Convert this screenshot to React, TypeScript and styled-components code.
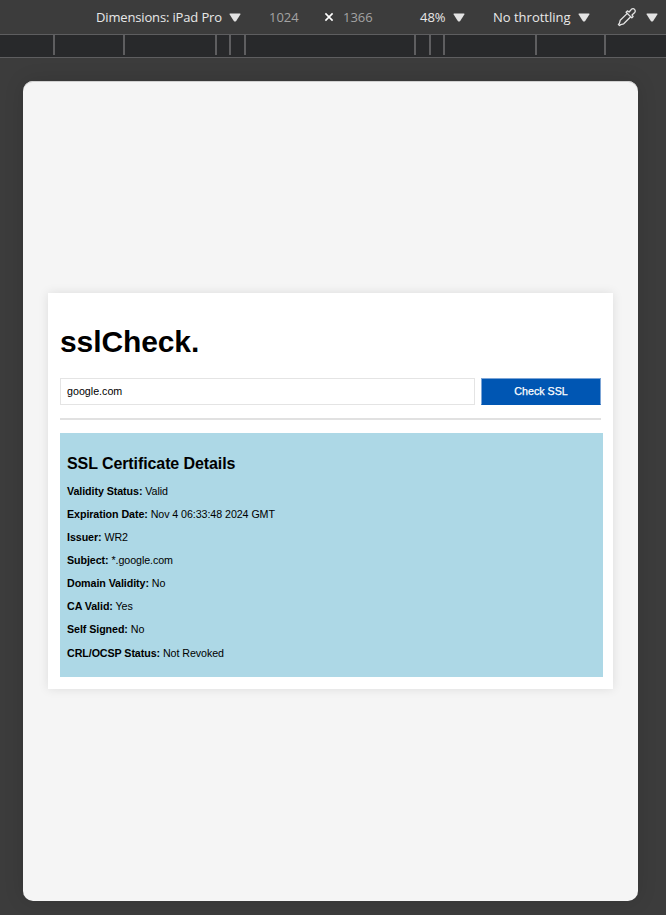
import React from "react";
import styled, { createGlobalStyle } from "styled-components";

const GlobalStyle = createGlobalStyle`
  * { box-sizing: border-box; }
  body { margin: 0; background: #3c3c3c; overflow: hidden; }
`;

const Page = styled.div`
  width: 666px;
  height: 915px;
  display: flex;
  flex-direction: column;
  background: #3c3c3c;
  font-family: "Liberation Sans", Arial, sans-serif;
`;

const Toolbar = styled.header`
  height: 34px;
  display: flex;
  align-items: center;
  padding-left: 96px;
  font: 13px/34px "Open Sans", "Noto Sans", sans-serif;
  color: #e3e3e3;
  white-space: nowrap;
`;

const Label = styled.span<{ $w: number; $gap?: number; $dim?: boolean; $ls?: number }>`
  flex: none;
  width: ${(p) => p.$w}px;
  margin-left: ${(p) => p.$gap ?? 0}px;
  letter-spacing: ${(p) => p.$ls ?? 0}px;
  color: ${(p) => (p.$dim ? "#a3a3a3" : "#e8e8e8")};
`;

const Glyph = styled.svg<{ $gap: number }>`
  flex: none;
  display: block;
  margin-left: ${(p) => p.$gap}px;
`;

const Ruler = styled.div`
  height: 24px;
  flex: none;
  display: grid;
  grid-template-columns: 53px 70px 92px 14px 15px 170px 15px 14px 92px 69px 62px;
  background: #28292b;
  border-top: 1px solid #5e5e60;
  border-bottom: 1px solid #5e5e60;
`;

const Segment = styled.i<{ $tick: boolean }>`
  height: 20px;
  border-left: ${(p) => (p.$tick ? "2px solid #5e5e60" : "none")};
`;

const Device = styled.main`
  width: 615px;
  height: 820px;
  margin: 23px 0 0 23px;
  padding: 212px 25px 0;
  flex: none;
  background: #f5f5f5;
  border-radius: 10px;
  box-shadow: inset 0 1px 0 #d0d0d0, 0 0 20px rgba(0, 0, 0, 0.12);
`;

const Card = styled.section`
  width: 564.5px;
  height: 396px;
  padding: 30px 12px 0;
  background: #fff;
  box-shadow: 0 0 10px rgba(0, 0, 0, 0.1);
`;

const Title = styled.h1`
  margin: 0;
  height: 55px;
  font-size: 30px;
  letter-spacing: -0.1px;
  line-height: 38px;
  color: #000;
`;

const Form = styled.div`
  display: flex;
  gap: 6px;
  height: 27px;
`;

const Field = styled.input`
  width: 415px;
  height: 27px;
  padding: 0 6px 2px;
  border: 1px solid #e4e4e4;
  border-radius: 0;
  outline: 0;
  background: #fff;
  color: #000;
  font: 10.7px "Liberation Sans", Arial, sans-serif;
`;

const Button = styled.button`
  width: 120px;
  height: 27px;
  padding: 0 0 2px 1px;
  border: 1px solid #7ba4d6;
  border-bottom-color: #0056b3;
  background: #0056b3;
  color: #fff;
  font: 10.7px "Liberation Sans", Arial, sans-serif;
  -webkit-text-stroke: 0.25px #fff;
`;

const Rule = styled.hr`
  width: 540.5px;
  height: 2px;
  margin: 13px 0;
  border: 0;
  background: #e1e1e1;
`;

const Details = styled.div`
  width: 543px;
  height: 244px;
  padding: 20px 7px 0;
  background: #add8e6;
  color: #000;
`;

const Heading = styled.h2`
  margin: 0 0 6px;
  font-size: 16px;
  letter-spacing: -0.09px;
  line-height: 21px;
`;

const Row = styled.p`
  margin: 0;
  height: 23px;
  font-size: 10.7px;
  letter-spacing: -0.075px;
  line-height: 23px;
  white-space: nowrap;

  &:last-child {
    margin-top: 1px;
  }
`;

const Triangle = ({ gap }: { gap: number }) => (
  <Glyph $gap={gap} width="12" height="9" viewBox="0 0 12 9">
    <path d="M1 .5h10q.9 0 .5.8L7.2 7.9q-1.2 1.2-2.4 0L.5 1.3Q.1.5 1 .5z" fill="#e3e3e3" />
  </Glyph>
);

const rows: [string, string][] = [
  ["Validity Status:", "Valid"],
  ["Expiration Date:", "Nov 4 06:33:48 2024 GMT"],
  ["Issuer:", "WR2"],
  ["Subject:", "*.google.com"],
  ["Domain Validity:", "No"],
  ["CA Valid:", "Yes"],
  ["Self Signed:", "No"],
  ["CRL/OCSP Status:", "Not Revoked"],
];

export default function App() {
  return (
    <Page>
      <GlobalStyle />
      <Toolbar>
        <Label $w={127} $ls={-0.15}>Dimensions: iPad Pro</Label>
        <Triangle gap={6} />
        <Label $w={30} $gap={28} $dim>1024</Label>
        <Glyph $gap={25} width="10" height="10" viewBox="0 0 10 10">
          <path d="M1.4 1.4l7.2 7.2M8.6 1.4L1.4 8.6" stroke="#fff" strokeWidth="1.6" />
        </Glyph>
        <Label $w={30} $gap={9} $dim>1366</Label>
        <Label $w={27} $gap={47}>48%</Label>
        <Triangle gap={6} />
        <Label $w={79} $gap={28}>No throttling</Label>
        <Triangle gap={6} />
        <Glyph $gap={27} width="20" height="20" viewBox="0 0 20 20" fill="none" stroke="#e3e3e3" strokeWidth="1.3" strokeLinejoin="round" strokeLinecap="round">
          <path d="M10.3 6.4L3.2 13.3L2.4 16.3L1.4 17.5L2.5 18.5L3.8 17.6L6.7 16.8L13.7 9.8" />
          <path d="M9.1 5.2L10.4 3.9L12.1 5L14.4 2.3Q16.1 .9 17.6 2.4Q19 3.9 17.7 5.6L15 7.9L16.1 9.6L14.8 10.9Z" />
        </Glyph>
        <Triangle gap={9} />
      </Toolbar>
      <Ruler>
        {Array.from({ length: 11 }, (_, i) => <Segment key={i} $tick={i > 0} />)}
      </Ruler>
      <Device>
        <Card>
          <Title>sslCheck.</Title>
          <Form>
            <Field defaultValue="google.com" spellCheck={false} />
            <Button>Check SSL</Button>
          </Form>
          <Rule />
          <Details>
            <Heading>SSL Certificate Details</Heading>
            {rows.map(([name, value]) => (
              <Row key={name}><b>{name}</b> {value}</Row>
            ))}
          </Details>
        </Card>
      </Device>
    </Page>
  );
}
